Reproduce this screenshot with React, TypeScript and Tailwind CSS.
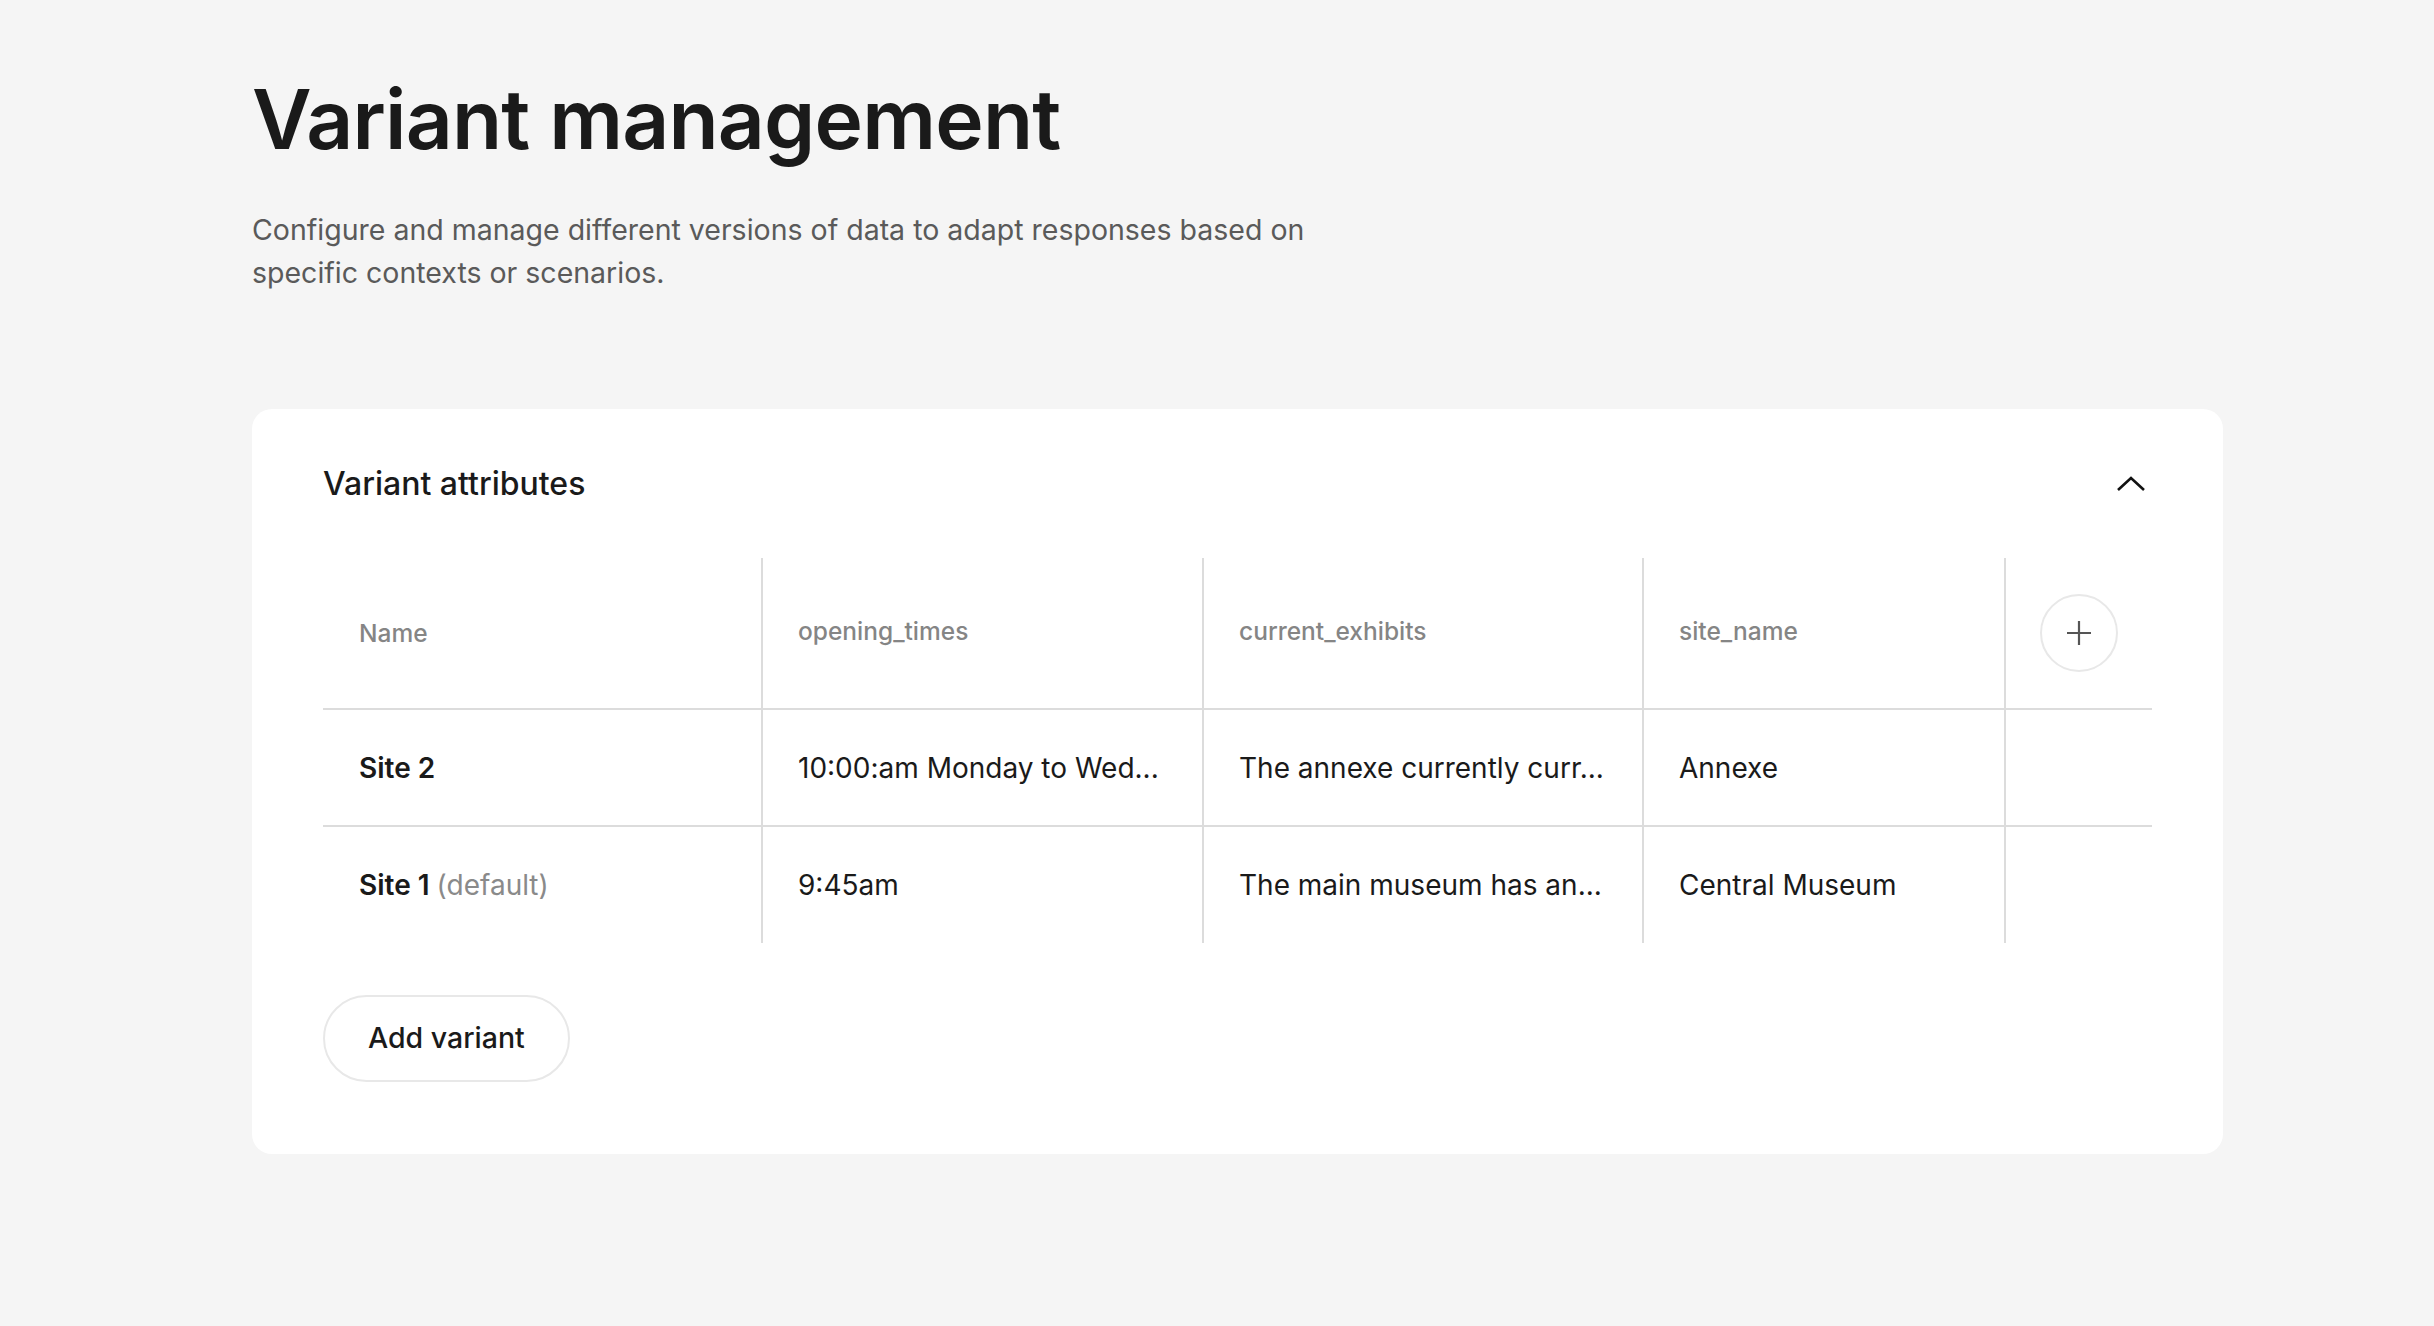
const columns = ['opening_times', 'current_exhibits', 'site_name']

const rows = [
  { name: 'Site 2', isDefault: false, values: ['10:00:am Monday to Wed...', 'The annexe currently curr...', 'Annexe'] },
  { name: 'Site 1', isDefault: true, values: ['9:45am', 'The main museum has an...', 'Central Museum'] },
]

function ChevronUp() {
  return (
    <svg width="30" height="16" viewBox="0 0 30 16" fill="none" aria-hidden="true">
      <polyline points="2,14 15,2 28,14" stroke="#111111" strokeWidth="2.6" strokeLinejoin="miter" />
    </svg>
  )
}

function PlusIcon() {
  return (
    <svg width="26" height="26" viewBox="0 0 26 26" fill="none" aria-hidden="true">
      <path d="M13 1v24M1 13h24" stroke="#555555" strokeWidth="2.2" />
    </svg>
  )
}

export default function App() {
  return (
    <div className="min-h-screen bg-[#f5f5f5] font-['Inter','Liberation_Sans',sans-serif] text-[#1a1a1a]">
      <div className="ml-[252px] w-[1971px] pt-[79px] pb-[170px]">
        {/* 页面标题 */}
        <h1 className="text-[82px] font-semibold leading-none tracking-[-0.01em] text-[#1a1a1a]">
          Variant management
        </h1>
        <p className="mt-[47px] max-w-[1100px] text-[28.5px] leading-[43px] text-[#5a5a5a]">
          Configure and manage different versions of data to adapt responses based on specific contexts or scenarios.
        </p>

        {/* 变体属性卡片 */}
        <section className="mt-[115px] rounded-[20px] bg-white px-[71px] pt-[55px] pb-[72px]">
          <div className="flex h-[40px] items-center justify-between">
            <h2 className="text-[32px] font-medium text-[#1a1a1a]">Variant attributes</h2>
            <button className="mr-[6px] flex items-center">
              <ChevronUp />
            </button>
          </div>

          <div className="mt-[54px] grid grid-cols-[440px_441px_440px_362px_1fr]">
            {/* 表头 */}
            <div className="flex h-[152px] items-center border-r-2 border-b-2 border-[#dcdcdc] pl-[36px] text-[24.5px] font-medium text-[#858585]">
              Name
            </div>
            {columns.map((col) => (
              <div
                key={col}
                className="flex h-[152px] items-center border-r-2 border-b-2 border-[#dcdcdc] pl-[35px] pb-[4px] text-[24.5px] font-medium text-[#858585]"
              >
                {col}
              </div>
            ))}
            <div className="flex h-[152px] items-center justify-center border-b-2 border-[#dcdcdc]">
              <button className="flex h-[78px] w-[78px] items-center justify-center rounded-full border-2 border-[#e8e8e8] bg-white">
                <PlusIcon />
              </button>
            </div>

            {/* 数据行 */}
            {rows.map((row, i) => {
              const last = i === rows.length - 1
              const rowBorder = last ? 'h-[116px]' : 'h-[117px] border-b-2'
              return (
                <div key={row.name} className="contents">
                  <div className={`flex items-center border-r-2 border-[#dcdcdc] pl-[36px] text-[28px] ${rowBorder}`}>
                    <span className="font-semibold text-[#1a1a1a]">{row.name}</span>
                    {row.isDefault && <span className="ml-[7px] text-[#8a8a8a]">(default)</span>}
                  </div>
                  {row.values.map((v, j) => (
                    <div
                      key={j}
                      className={`flex items-center border-r-2 border-[#dcdcdc] pl-[35px] text-[28px] text-[#1a1a1a] ${rowBorder}`}
                    >
                      {v}
                    </div>
                  ))}
                  <div className={`border-[#dcdcdc] ${rowBorder}`} />
                </div>
              )
            })}
          </div>

          <button className="mt-[52px] h-[87px] rounded-full border-2 border-[#e8e8e8] bg-white px-[43px] text-[28.5px] font-medium text-[#1a1a1a]">
            Add variant
          </button>
        </section>
      </div>
    </div>
  )
}
